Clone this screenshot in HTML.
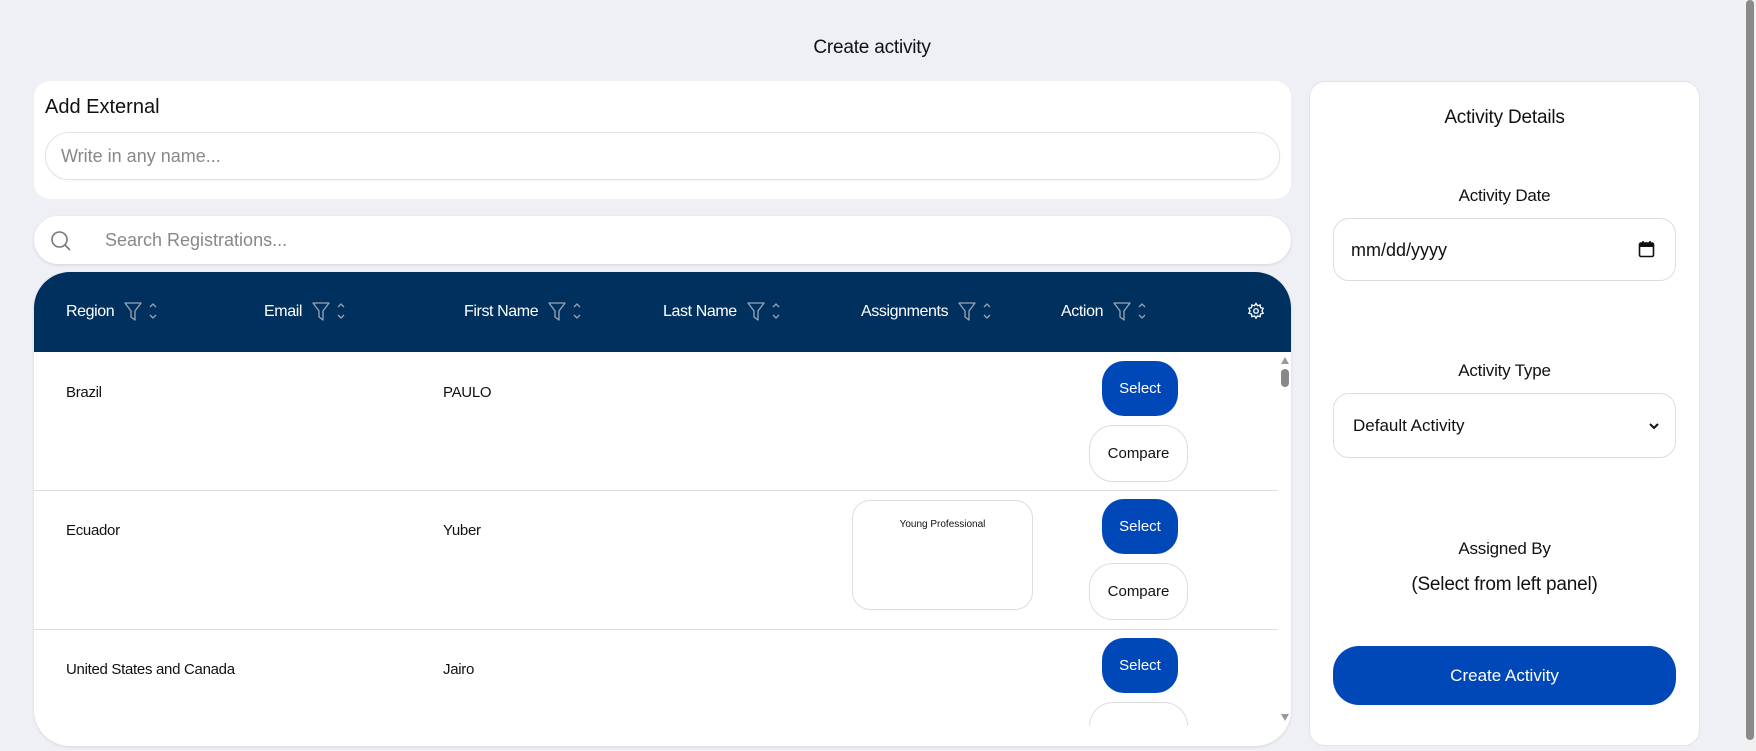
<!DOCTYPE html>
<html><head><meta charset="utf-8"><style>
*{box-sizing:border-box;margin:0;padding:0}
body{width:1756px;height:751px;overflow:hidden;background:#eff0f5;font-family:"Liberation Sans",Arial,sans-serif;color:#111;position:relative}
.abs{position:absolute}
.card{background:#fff;border-radius:16px}
.t{white-space:nowrap}
.hl{position:absolute;top:301px;color:#fff;font-size:16px;letter-spacing:-0.4px;display:flex;align-items:center;gap:10px}
.cell{position:absolute;font-size:15px;letter-spacing:-0.3px}
.sel{position:absolute;left:1102px;width:76px;height:55px;background:#0047b8;color:#fff;border-radius:22px;font-size:15px;display:flex;align-items:center;justify-content:center}
.cmp{position:absolute;left:1089px;width:99px;height:57px;background:#fff;border:1px solid #ddd;border-radius:24px;font-size:15px;display:flex;align-items:center;justify-content:center}
.lbl{position:absolute;left:1309px;width:391px;text-align:center;font-size:17px;letter-spacing:-0.2px}
</style></head><body>
<div class="abs t" style="left:0;width:1744px;top:37px;text-align:center;font-size:19px;letter-spacing:-0.2px">Create activity</div>

<div class="abs card" style="left:34px;top:81px;width:1257px;height:118px"></div>
<div class="abs t" style="left:45px;top:96px;font-size:20px">Add External</div>
<div class="abs" style="left:45px;top:132px;width:1235px;height:48px;border:1px solid #e3e3e8;border-radius:24px;box-shadow:0 1px 2px rgba(0,0,0,.05)"></div>
<div class="abs t" style="left:61px;top:146px;font-size:18px;color:#888">Write in any name...</div>

<div class="abs" style="left:34px;top:216px;width:1257px;height:48px;background:#fff;border-radius:24px;box-shadow:0 1px 3px rgba(0,0,0,.12)"></div>
<svg class="abs" style="left:49px;top:229px" width="24" height="24" viewBox="0 0 24 24" fill="none" stroke="#777" stroke-width="1.6"><circle cx="10.5" cy="10.5" r="7.5"/><path d="M16 16l5 5"/></svg>
<div class="abs t" style="left:105px;top:230px;font-size:18px;color:#888">Search Registrations...</div>

<div class="abs" style="left:34px;top:272px;width:1257px;height:474px;background:#fff;border-radius:36px;overflow:hidden;box-shadow:0 1px 3px rgba(0,0,0,.1)">
 <div style="height:80px;background:#00305e"></div>
</div>
<svg width="0" height="0" style="position:absolute"><defs><g id="fs"><path d="M1 2h16l-6 8v9l-4-3v-6z" fill="none" stroke="#9aa5b4" stroke-width="1.3" stroke-linejoin="round"/><path d="M26 6l3-3 3 3M26 14l3 3 3-3" fill="none" stroke="#9aa5b4" stroke-width="1.3"/></g></defs></svg>
<div class="hl" style="left:66px">Region<svg width="34" height="22"><use href="#fs"/></svg></div>
<div class="hl" style="left:264px">Email<svg width="34" height="22"><use href="#fs"/></svg></div>
<div class="hl" style="left:464px">First Name<svg width="34" height="22"><use href="#fs"/></svg></div>
<div class="hl" style="left:663px">Last Name<svg width="34" height="22"><use href="#fs"/></svg></div>
<div class="hl" style="left:861px">Assignments<svg width="34" height="22"><use href="#fs"/></svg></div>
<div class="hl" style="left:1061px">Action<svg width="34" height="22"><use href="#fs"/></svg></div>
<svg class="abs" style="left:1247px;top:302px" width="18" height="18" viewBox="0 0 24 24" fill="none" stroke="#fff" stroke-width="1.8"><circle cx="12" cy="12" r="3"/><path d="M12 2l2 3 3.5-1 .5 3.5 3.5 1-1.5 3.5 1.5 3-3.5 1-.5 3.5-3.5-1-2 3-2-3-3.5 1-.5-3.5-3.5-1 1.5-3-1.5-3.5 3.5-1 .5-3.5 3.5 1z"/></svg>

<div class="cell t" style="left:66px;top:384px">Brazil</div>
<div class="cell t" style="left:443px;top:384px">PAULO</div>
<div class="sel" style="top:361px">Select</div>
<div class="cmp" style="top:425px">Compare</div>
<div class="abs" style="left:34px;top:490px;width:1243px;height:1px;background:#ddd"></div>

<div class="cell t" style="left:66px;top:522px">Ecuador</div>
<div class="cell t" style="left:443px;top:522px">Yuber</div>
<div class="abs" style="left:852px;top:500px;width:181px;height:110px;border:1px solid #ddd;border-radius:18px;font-size:10px;text-align:center;padding-top:18px">Young Professional</div>
<div class="sel" style="top:499px">Select</div>
<div class="cmp" style="top:563px">Compare</div>
<div class="abs" style="left:34px;top:629px;width:1243px;height:1px;background:#ddd"></div>

<div class="cell t" style="left:66px;top:661px;width:196px;overflow:hidden">United States and Canada</div>
<div class="cell t" style="left:443px;top:661px">Jairo</div>
<div class="sel" style="top:638px">Select</div>
<div class="abs" style="left:1089px;top:702px;width:99px;height:24px;border:1px solid #ddd;border-bottom:none;border-radius:24px 24px 0 0;background:#fff"></div>
<div class="abs" style="left:1281px;top:357px;width:0;height:0;border-left:4px solid transparent;border-right:4px solid transparent;border-bottom:7px solid #999"></div>
<div class="abs" style="left:1281px;top:369px;width:8px;height:18px;background:#888;border-radius:4px"></div>
<div class="abs" style="left:1281px;top:714px;width:0;height:0;border-left:4px solid transparent;border-right:4px solid transparent;border-top:7px solid #999"></div>

<div class="abs card" style="left:1309px;top:81px;width:391px;height:665px;border:1px solid #e3e3e8"></div>
<div class="lbl t" style="top:107px;font-size:19px">Activity Details</div>
<div class="lbl t" style="top:186px">Activity Date</div>
<div class="abs" style="left:1333px;top:218px;width:343px;height:63px;border:1px solid #ddd;border-radius:16px"></div>
<div class="abs t" style="left:1351px;top:240px;font-size:18px">mm/dd/yyyy</div>
<svg class="abs" style="left:1638px;top:240px" width="17" height="18" viewBox="0 0 17 18"><rect x="1.5" y="3" width="14" height="13.5" rx="1.5" fill="none" stroke="#111" stroke-width="1.6"/><rect x="1.5" y="3" width="14" height="4" fill="#111"/><path d="M5 1v3M12 1v3" stroke="#111" stroke-width="1.6"/></svg>
<div class="lbl t" style="top:361px">Activity Type</div>
<div class="abs" style="left:1333px;top:393px;width:343px;height:65px;border:1px solid #ddd;border-radius:16px"></div>
<div class="abs t" style="left:1353px;top:416px;font-size:17px">Default Activity</div>
<svg class="abs" style="left:1649px;top:422px" width="10" height="8" viewBox="0 0 10 8"><path d="M1 2l4 4 4-4" fill="none" stroke="#111" stroke-width="2"/></svg>
<div class="lbl t" style="top:539px">Assigned By</div>
<div class="lbl t" style="top:574px;font-size:19px">(Select from left panel)</div>
<div class="abs" style="left:1333px;top:646px;width:343px;height:59px;background:#0047b8;border-radius:26px;color:#fff;font-size:17px;display:flex;align-items:center;justify-content:center">Create Activity</div>

<div class="abs" style="left:1744px;top:0;width:12px;height:751px;background:#f1f1f1"></div>
<div class="abs" style="left:1746px;top:0;width:8px;height:740px;background:#8a8a8a;border-radius:4px"></div>
</body></html>
